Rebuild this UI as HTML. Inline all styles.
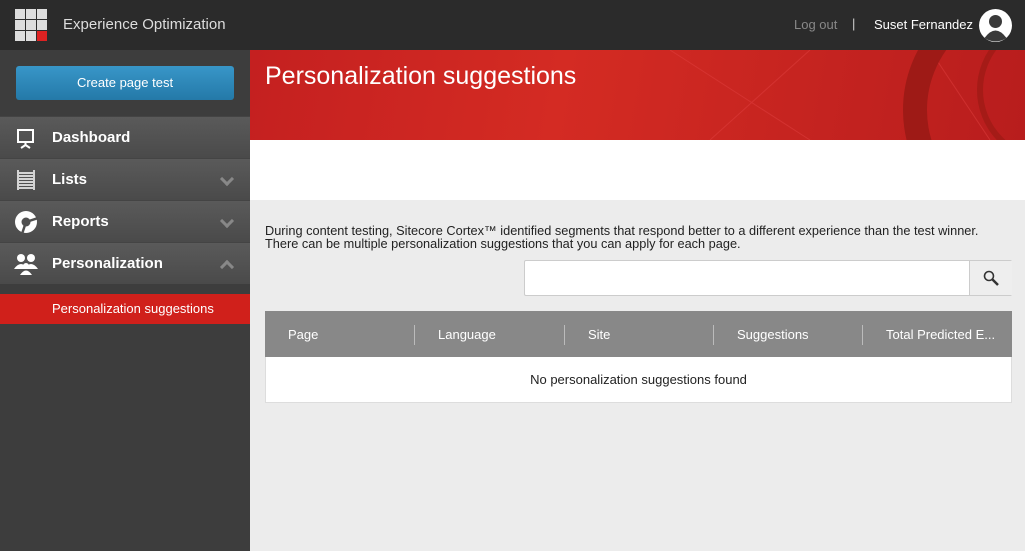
<!DOCTYPE html>
<html><head><style>
body{margin:0;width:1025px;height:551px;overflow:hidden;font-family:"Liberation Sans",sans-serif;background:#ececec;position:relative}
.top{position:absolute;left:0;top:0;width:1025px;height:50px;background:#2b2b2b}
.side{position:absolute;left:0;top:50px;width:250px;height:501px;background:#3d3d3d}
.btn{position:absolute;left:16px;top:16px;width:218px;height:34px;background:linear-gradient(#3896c8,#2479a8);border-radius:3px;color:#fff;font-size:13px;text-align:center;line-height:34px}
.nav{position:absolute;left:0;width:250px;height:41px;background:linear-gradient(#5a5a5a,#4a4a4a);border-top:1px solid #444;color:#fff;font-weight:bold;font-size:15px;line-height:41px}
.nav span{position:absolute;left:52px}
.chev{position:absolute;left:222px;top:15px;width:7px;height:7px;border-right:3px solid #888;border-bottom:3px solid #888;transform:rotate(45deg)}
.up{transform:rotate(-135deg);top:19px}
.hero{position:absolute;left:250px;top:50px;width:775px;height:90px;background:linear-gradient(100deg,#c42020,#d42b23 40%,#b81d1d);overflow:hidden}
.white{position:absolute;left:250px;top:140px;width:775px;height:60px;background:#fff}
</style></head><body>
<div class="top">
 <svg style="position:absolute;left:15px;top:9px" width="33" height="33">
  <g fill="#ddd">
  <rect x="0" y="0" width="10" height="10"/><rect x="11" y="0" width="10" height="10"/><rect x="22" y="0" width="10" height="10"/>
  <rect x="0" y="11" width="10" height="10"/><rect x="11" y="11" width="10" height="10"/><rect x="22" y="11" width="10" height="10"/>
  <rect x="0" y="22" width="10" height="10"/><rect x="11" y="22" width="10" height="10"/></g>
  <rect x="22" y="22" width="10" height="10" fill="#d22"/></svg>
 <div style="position:absolute;left:63px;top:16px;color:#ddd;font-size:15px">Experience Optimization</div>
 <div style="position:absolute;left:794px;top:17px;color:#888;font-size:13px">Log out</div>
 <div style="position:absolute;left:852px;top:16px;color:#ccc;font-size:13px">|</div>
 <div style="position:absolute;left:874px;top:17px;color:#fff;font-size:13px">Suset Fernandez</div>
 <svg style="position:absolute;left:979px;top:9px" width="33" height="33"><circle cx="16.5" cy="16.5" r="16.5" fill="#fff"/><circle cx="16.5" cy="12.5" r="6.5" fill="#3a3a3a"/><path d="M5.5 29 Q16.5 14 27.5 29 Q16.5 36 5.5 29Z" fill="#3a3a3a"/></svg>
</div>
<div class="side">
 <div class="btn">Create page test</div>
 <div class="nav" style="top:66px"><svg style="position:absolute;left:16px;top:12px" width="20" height="20" fill="none" stroke="#fff" stroke-width="2"><rect x="2" y="1" width="15" height="12"/><path d="M9.5 13v3M5 19l4.5-3 4.5 3"/></svg><span>Dashboard</span></div>
 <div class="nav" style="top:108px"><svg style="position:absolute;left:16px;top:11px" width="20" height="20" stroke="#fff" stroke-width="1.5"><path d="M2 0v20M18 0v20M3 3h14M3 6h14M3 9h14M3 12h14M3 15h14M3 18h14"/></svg><span>Lists</span><div class="chev"></div></div>
 <div class="nav" style="top:150px"><svg style="position:absolute;left:14px;top:9px" width="24" height="24"><circle cx="12" cy="12" r="11" fill="#fff"/><circle cx="12" cy="12" r="4.5" fill="#505050"/><path d="M12 12L8 24M12 12L24 8" stroke="#505050" stroke-width="2.5"/></svg><span>Reports</span><div class="chev"></div></div>
 <div class="nav" style="top:192px"><svg style="position:absolute;left:14px;top:10px" width="24" height="22" fill="#fff"><circle cx="7" cy="5" r="4"/><circle cx="17" cy="5" r="4"/><path d="M0 16q7-10 14 0z"/><path d="M10 16q7-10 14 0z"/><circle cx="12" cy="13" r="3"/><path d="M6 22q6-9 12 0z"/></svg><span>Personalization</span><div class="chev up"></div></div>
 <div style="position:absolute;left:0;top:244px;width:250px;height:30px;background:#d0201b;color:#fff;font-size:13px;line-height:30px"><span style="margin-left:52px">Personalization suggestions</span></div>
</div>
<div class="hero">
 <svg width="775" height="90" style="position:absolute;left:0;top:0"><path d="M420 0L560 90M560 0L460 90M680 0L740 90" stroke="#e04040" stroke-width="1" opacity=".5"/><circle cx="780" cy="60" r="115" fill="none" stroke="#9e1a16" stroke-width="24"/><circle cx="800" cy="40" r="70" fill="none" stroke="#a51b17" stroke-width="6"/></svg>
 <div style="position:absolute;left:15px;top:12px;color:#fff;font-size:25px">Personalization suggestions</div>
</div>
<div class="white"></div>
<div style="position:absolute;left:265px;top:224px;font-size:12.75px;color:#222;line-height:13px">During content testing, Sitecore Cortex™ identified segments that respond better to a different experience than the test winner.<br>There can be multiple personalization suggestions that you can apply for each page.</div>
<div style="position:absolute;left:524px;top:260px;width:486px;height:34px;background:#fff;border:1px solid #ccc;border-radius:2px"></div>
<div style="position:absolute;left:969px;top:261px;width:42px;height:34px;background:#eee;border-left:1px solid #ccc"><svg style="position:absolute;left:13px;top:9px" width="16" height="16" fill="none" stroke="#333" stroke-width="1.6"><circle cx="6" cy="6" r="4.5"/><path d="M9.5 9.5L15 15" stroke-width="2.5"/></svg></div>
<div style="position:absolute;left:265px;top:311px;width:747px;height:46px;background:#888;color:#fff;font-size:13px">
 <div style="position:absolute;left:23px;top:16px">Page</div>
 <div style="position:absolute;left:149px;top:14px;width:1px;height:20px;background:#bbb"></div>
 <div style="position:absolute;left:173px;top:16px">Language</div>
 <div style="position:absolute;left:299px;top:14px;width:1px;height:20px;background:#bbb"></div>
 <div style="position:absolute;left:323px;top:16px">Site</div>
 <div style="position:absolute;left:448px;top:14px;width:1px;height:20px;background:#bbb"></div>
 <div style="position:absolute;left:472px;top:16px">Suggestions</div>
 <div style="position:absolute;left:597px;top:14px;width:1px;height:20px;background:#bbb"></div>
 <div style="position:absolute;left:621px;top:16px">Total Predicted E...</div>
</div>
<div style="position:absolute;left:265px;top:357px;width:745px;height:45px;background:#fff;border:1px solid #ddd;border-top:none;text-align:center;line-height:46px;font-size:13px;color:#222">No personalization suggestions found</div>
</body></html>
